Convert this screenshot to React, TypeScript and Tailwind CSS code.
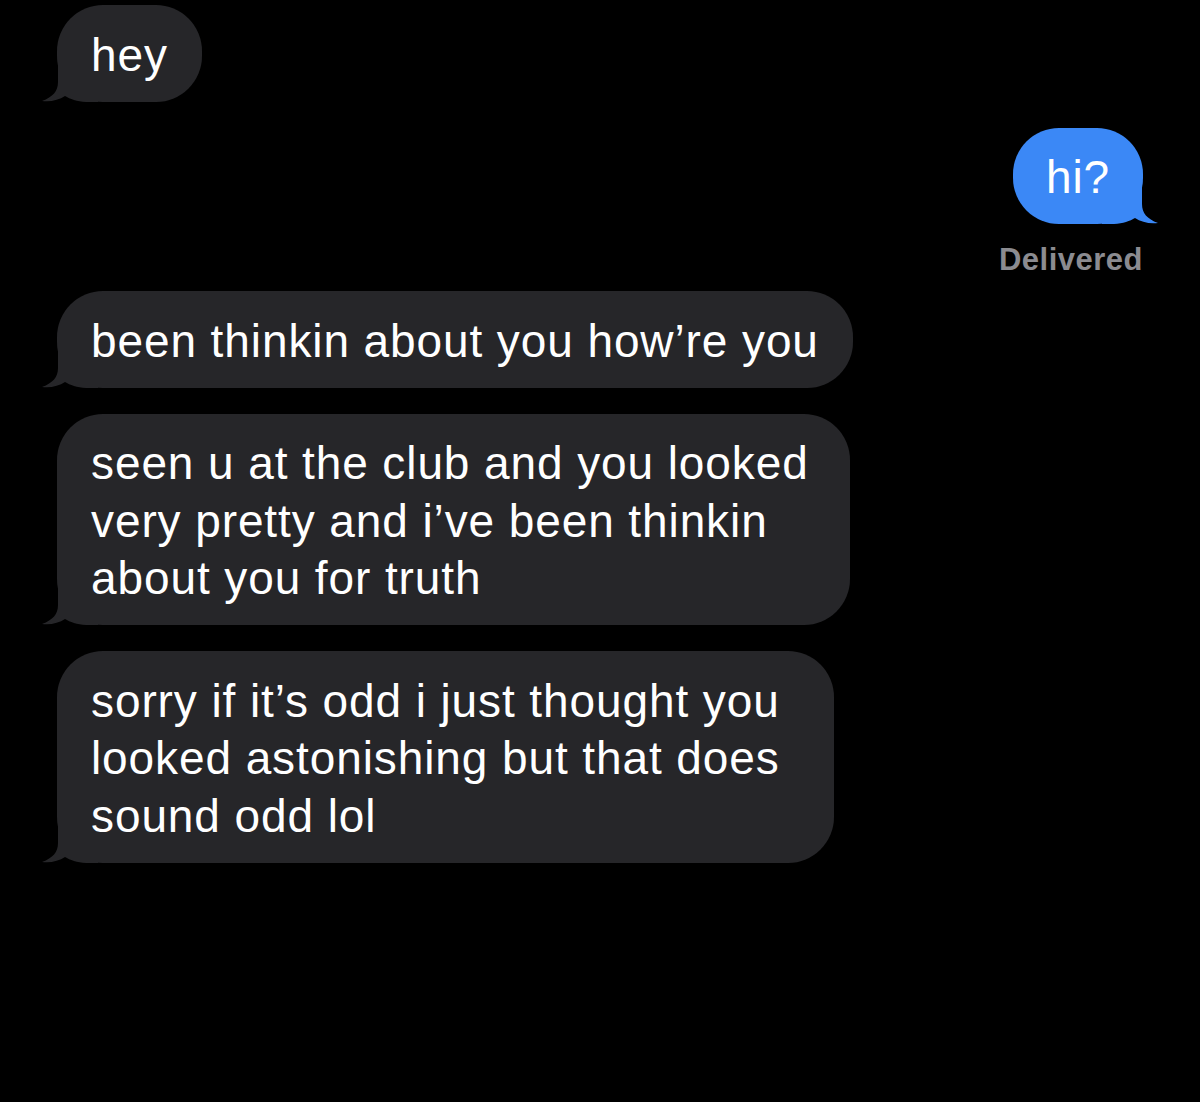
import type { ReactNode } from 'react';

const GRAY = '#262629';
const BLUE = '#3b88f6';

function Tail({ side, color }: { side: 'left' | 'right'; color: string }) {
  // iMessage style tail at the bottom corner of a bubble
  return (
    <svg
      width="56"
      height="38"
      viewBox="0 0 56 38"
      className={
        side === 'left'
          ? 'absolute bottom-0 left-[-15px]'
          : 'absolute bottom-0 right-[-15px] -scale-x-100'
      }
    >
      <path
        d="M16 0 L16 18 C16 27 11 33 0 37 C9 38 17 36 23 32 C28 35 35 37.5 44 38 L56 38 L56 0 Z"
        fill={color}
      />
    </svg>
  );
}

function Bubble({
  children,
  mine = false,
  className = '',
}: {
  children: ReactNode;
  mine?: boolean;
  className?: string;
}) {
  const color = mine ? BLUE : GRAY;
  return (
    <div
      className={`relative rounded-[46px] pt-[21.5px] pb-[17.5px] text-[46px] leading-[57.5px] tracking-[0.9px] text-white ${
        mine ? 'bg-[#3b88f6]' : 'bg-[#262629]'
      } ${className}`}
    >
      <Tail side={mine ? 'right' : 'left'} color={color} />
      <span className="relative">{children}</span>
    </div>
  );
}

export default function App() {
  return (
    <div
      className="h-[1102px] w-[1200px] overflow-hidden bg-black pt-[5px]"
      style={{ fontFamily: '"Liberation Sans", Arial, sans-serif' }}
    >
      <div className="flex flex-col">
        <div className="pl-[57px]">
          <Bubble className="w-fit px-[34px]">hey</Bubble>
        </div>

        <div className="mt-[26px] flex flex-col items-end pr-[57px]">
          <Bubble mine className="w-fit px-[33px]">
            hi?
          </Bubble>
          <div className="mt-[18px] text-[31px] font-bold leading-[36px] tracking-[0.5px] text-[#8b8b90]">
            Delivered
          </div>
        </div>

        <div className="mt-[13px] flex flex-col gap-[26px] pl-[57px]">
          <Bubble className="w-fit px-[34px]">been thinkin about you how’re you</Bubble>
          <Bubble className="w-[793px] pl-[34px]">
            seen u at the club and you looked
            <br />
            very pretty and i’ve been thinkin
            <br />
            about you for truth
          </Bubble>
          <Bubble className="w-[777px] pl-[34px]">
            sorry if it’s odd i just thought you
            <br />
            looked astonishing but that does
            <br />
            sound odd lol
          </Bubble>
        </div>
      </div>
    </div>
  );
}
